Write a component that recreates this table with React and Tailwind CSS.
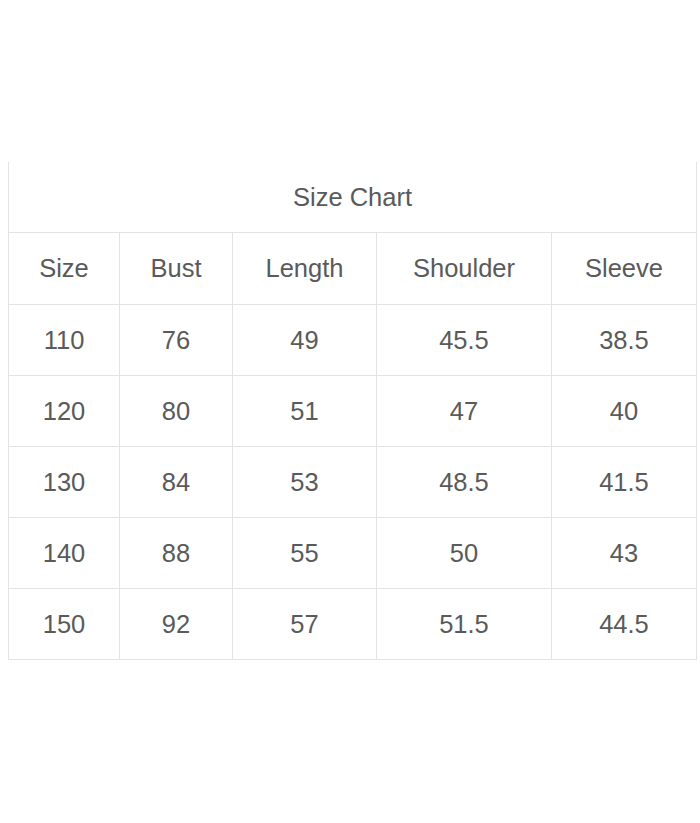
import React from "react";

const headers = ["Size", "Bust", "Length", "Shoulder", "Sleeve"];
const rows = [
  ["110", "76", "49", "45.5", "38.5"],
  ["120", "80", "51", "47", "40"],
  ["130", "84", "53", "48.5", "41.5"],
  ["140", "88", "55", "50", "43"],
  ["150", "92", "57", "51.5", "44.5"],
];

function Row({ cells, last, tall }) {
  return (
    <div
      className={
        "grid grid-cols-[110px_113px_144px_175px_145px] border-t border-[#e3e3e3] " +
        (last ? "border-b" : "")
      }
    >
      {cells.map((c, i) => (
        <div
          key={i}
          className={
            (tall ? "h-[71px] " : "h-[70px] ") +
            "flex items-center justify-center " +
            (i > 0 ? "border-l border-[#e3e3e3]" : "")
          }
        >
          {c}
        </div>
      ))}
    </div>
  );
}

export default function App() {
  return (
    <div
      className="w-[700px] h-[823px] bg-white pt-[162px] pl-[8px] text-[#5a5a5a] text-[25.5px]"
      style={{ fontFamily: '"Liberation Sans", Arial, sans-serif' }}
    >
      <div className="w-[689px] border-x border-[#e3e3e3]">
        <div className="h-[70px] flex items-center justify-center">Size Chart</div>
        <Row cells={headers} tall />
        {rows.map((r, i) => (
          <Row key={i} cells={r} last={i === rows.length - 1} />
        ))}
      </div>
    </div>
  );
}
